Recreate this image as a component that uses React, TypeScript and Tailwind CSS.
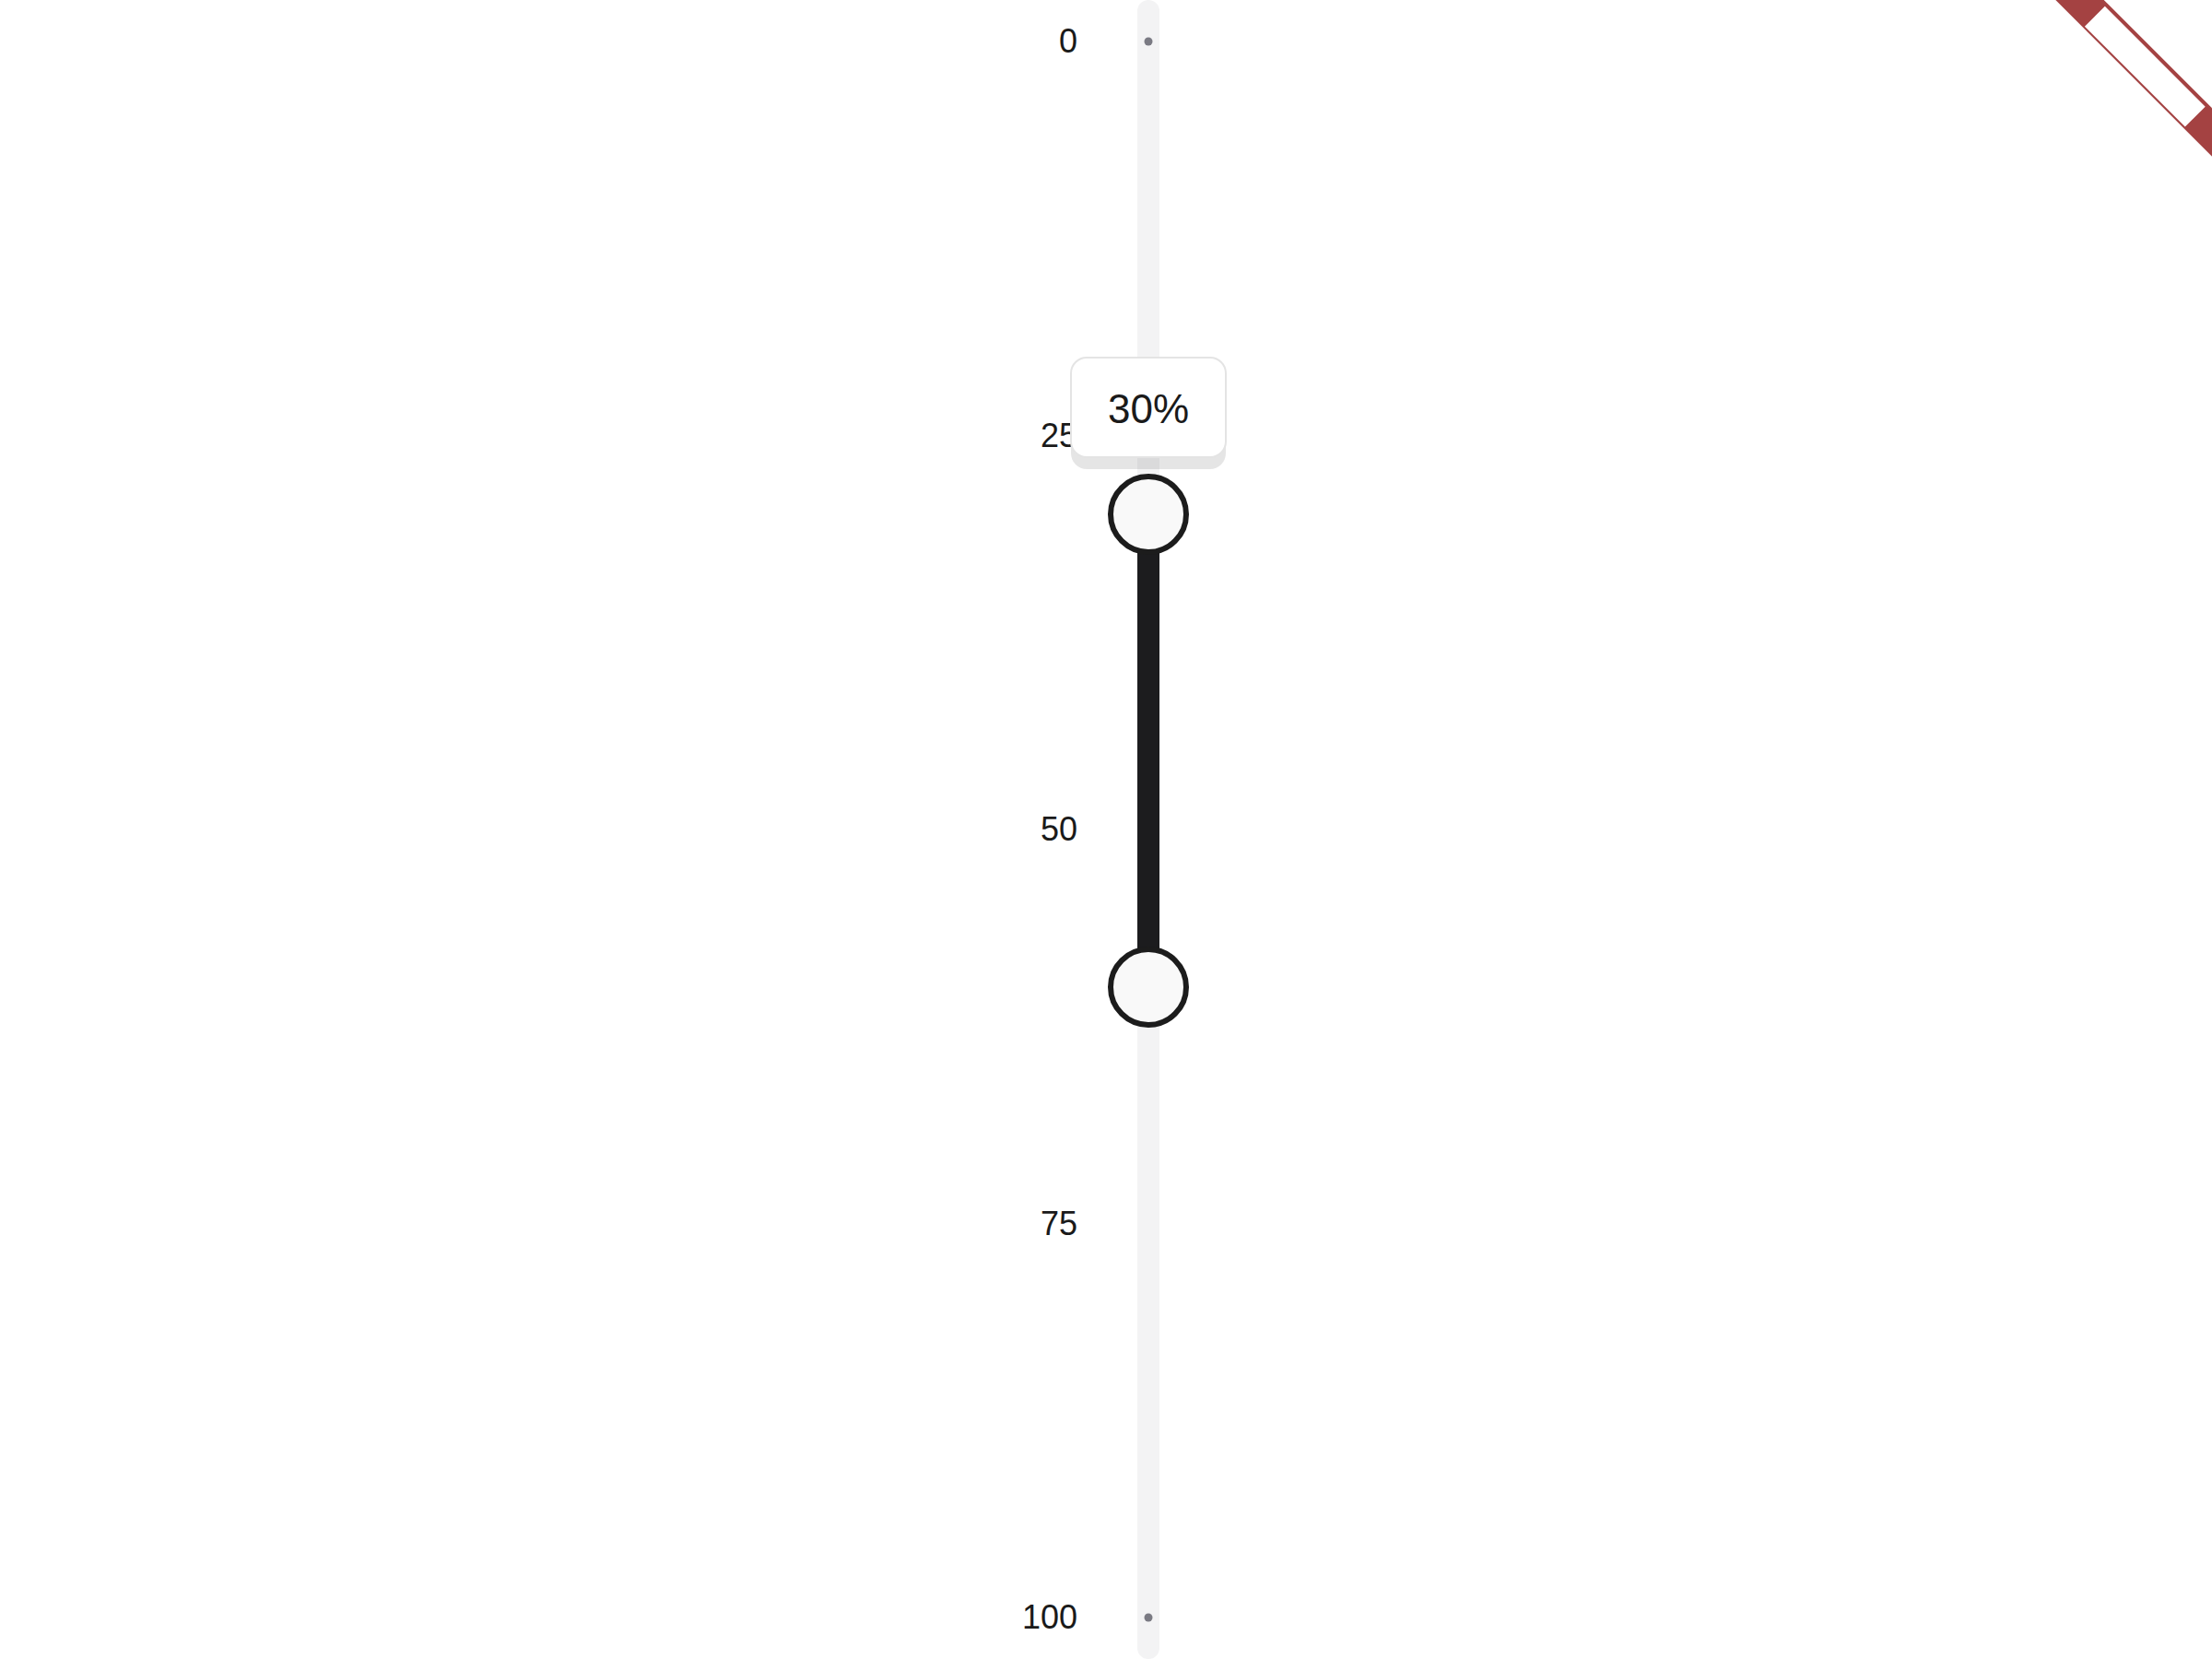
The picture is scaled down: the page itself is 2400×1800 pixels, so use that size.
import { useState } from "react"

const TOP_INSET = 45
const SPAN = 1710
const marks = [0, 25, 50, 75, 100]

function pos(v: number) {
  return TOP_INSET + (v / 100) * SPAN
}

function App() {

  const [range] = useState<[number, number]>([30, 60])
  const [low, high] = range

  return (
    <div className="relative w-screen h-screen overflow-hidden bg-white font-['Liberation_Sans',Arial,sans-serif] text-[#1a1a1a]">

      {/* SLIDER */}
      <div className="flex h-full pl-[1049px] gap-[65px]">

        {/* LABELS */}
        <div className="flex flex-col justify-between items-end w-[120px] h-full py-[27px]">
          {marks.map((m) => (
            <span key={m} className="text-[36px] leading-[36px]">
              {m}
            </span>
          ))}
        </div>

        {/* TRACK */}
        <div className="relative w-[24px] h-full rounded-full bg-[#f3f3f4] z-10">

          <span
            className="absolute left-1/2 -translate-x-1/2 -translate-y-1/2 w-[9px] h-[9px] rounded-full bg-[#7a7a83]"
            style={{ top: pos(0) }}
          />
          <span
            className="absolute left-1/2 -translate-x-1/2 -translate-y-1/2 w-[9px] h-[9px] rounded-full bg-[#7a7a83]"
            style={{ top: pos(100) }}
          />

          <div
            className="absolute left-0 right-0 bg-[#1c1c1e]"
            style={{ top: pos(low), height: pos(high) - pos(low) }}
          />

          {/* tooltip */}
          <div
            className="absolute left-1/2 -translate-x-1/2 w-[170px] h-[110px] rounded-[18px] border-2 border-[#e4e4e4] bg-white shadow-[0_13px_0_-1px_rgba(0,0,0,0.1)] flex items-center justify-center pt-[4px]"
            style={{ top: pos(low) - 171 }}
          >
            <span className="text-[44px] leading-none">{low}%</span>
          </div>

          {[low, high].map((v) => (
            <div
              key={v}
              className="absolute left-1/2 -translate-x-1/2 w-[88px] h-[88px] rounded-full border-[6px] border-[#1c1c1c] bg-[#f9f9f9]"
              style={{ top: pos(v) - 44 }}
            />
          ))}

        </div>

      </div>

      {/* CORNER RIBBON */}
      <div className="absolute left-[2178px] top-[53px] w-[300px] h-[37px] rotate-45 bg-[#a44242] flex justify-center pt-[4px]">
        <div className="w-[154px] h-[31px] bg-white" />
      </div>

    </div>
  )
}

export default App
